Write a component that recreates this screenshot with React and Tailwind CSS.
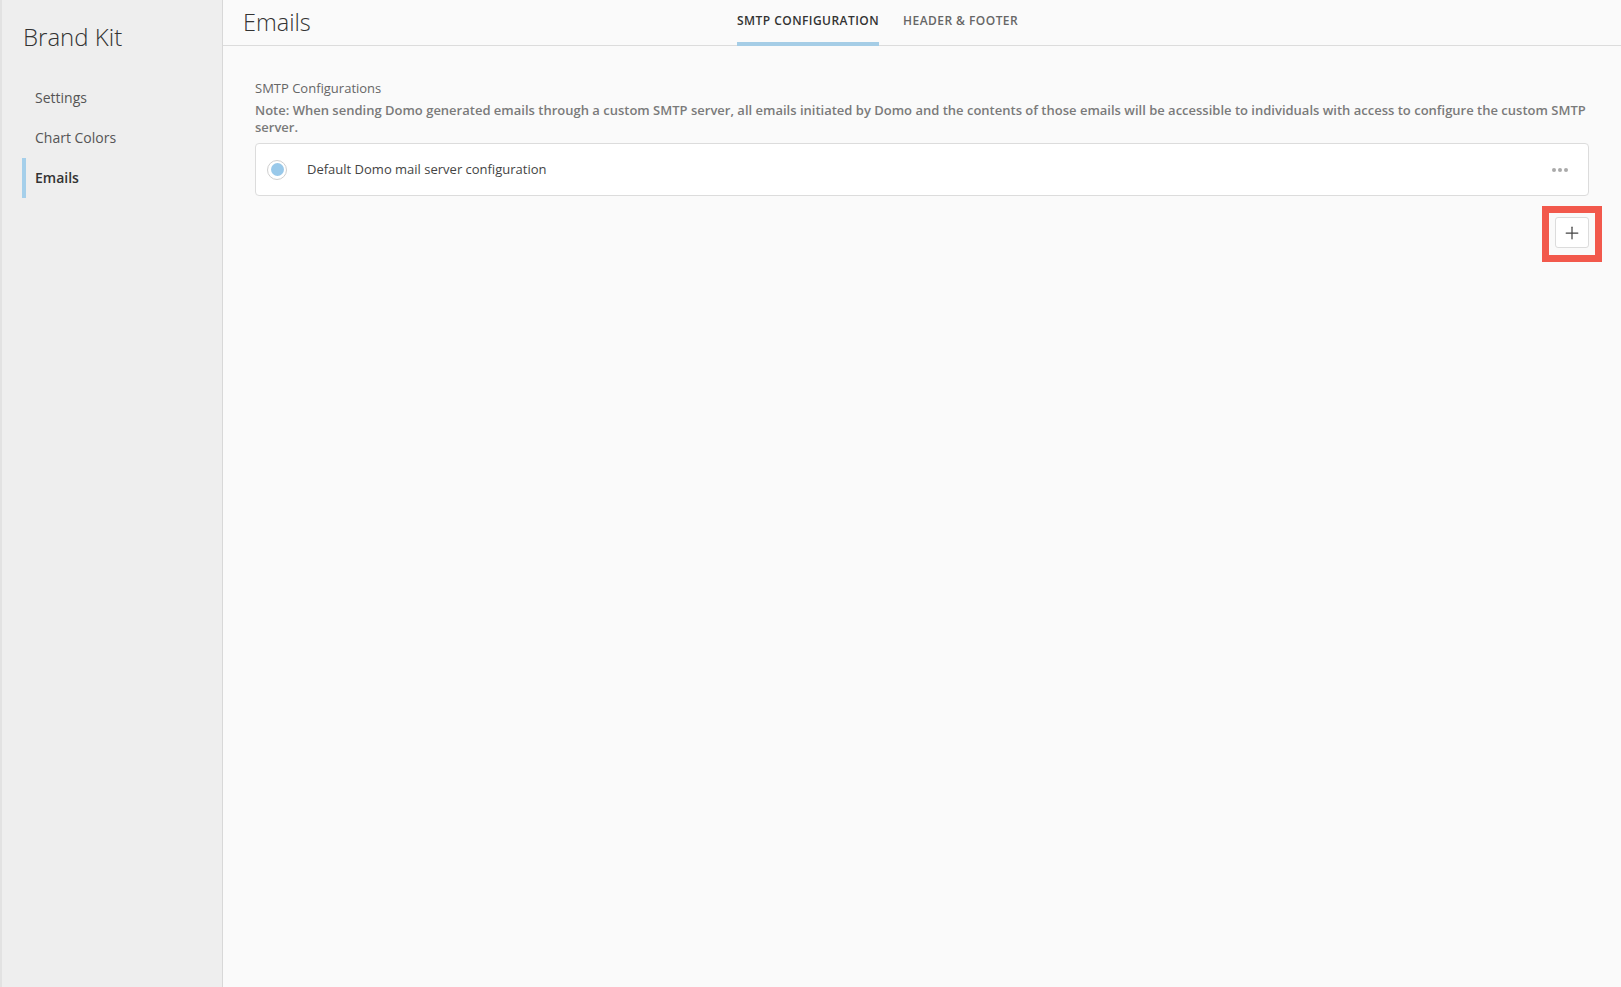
import { Plus } from "lucide-react";

const navItems = [
  { label: "Settings", active: false },
  { label: "Chart Colors", active: false },
  { label: "Emails", active: true },
];

function Sidebar() {
  return (
    <aside className="w-[223px] shrink-0 bg-[#eeeeee] border-l-2 border-l-[#e2e2e2] border-r border-r-[#d8d8d8] flex flex-col">
      {/* TITLE */}
      <h1 className="pl-[21px] pt-[19px] text-[24px] font-light text-[#333] leading-[36px]">
        Brand Kit
      </h1>

      {/* NAV */}
      <nav className="mt-[22px] flex flex-col">
        {navItems.map((item) => (
          <div
            key={item.label}
            className="relative h-[40px] flex items-center pl-[33px] text-[14px]"
          >
            {item.active && (
              <span className="absolute left-[20px] top-[1px] bottom-[-1px] w-[4px] bg-[#a5cfea]" />
            )}
            <span
              className={
                item.active
                  ? "font-semibold text-[#333]"
                  : "text-[#555]"
              }
            >
              {item.label}
            </span>
          </div>
        ))}
      </nav>
    </aside>
  );
}

function Header() {
  return (
    <header className="h-[46px] border-b border-[#dcdcdc] flex items-stretch pl-[20px]">
      <div className="w-[494px] shrink-0 pt-[6px]">
        <h2 className="text-[23.5px] font-light text-[#333] leading-[32px]">
          Emails
        </h2>
      </div>
      <div className="flex gap-[24px] text-[12px] font-semibold tracking-[0.45px]">
        <div className="relative flex items-start pt-[12px] text-[#333]">
          SMTP CONFIGURATION
          <span className="absolute left-0 right-0 bottom-[-1px] h-[4px] bg-[#a5cde6]" />
        </div>
        <div className="flex items-start pt-[12px] text-[#666]">
          HEADER &amp; FOOTER
        </div>
      </div>
    </header>
  );
}

function ConfigCard() {
  return (
    <div className="h-[53px] bg-white border border-[#dcdcdc] rounded-[4px] flex items-center pl-[11px] pr-[20px]">
      <div className="w-[20px] h-[20px] rounded-full border border-[#cfcfcf] bg-white flex items-center justify-center">
        <div className="w-[13px] h-[13px] rounded-full bg-[#99c9ea]" />
      </div>
      <span className="ml-[20px] text-[13px] text-[#444]">
        Default Domo mail server configuration
      </span>
      <div className="ml-auto flex gap-[2px]">
        <span className="w-[4px] h-[4px] rounded-full bg-[#aaa]" />
        <span className="w-[4px] h-[4px] rounded-full bg-[#aaa]" />
        <span className="w-[4px] h-[4px] rounded-full bg-[#aaa]" />
      </div>
    </div>
  );
}

export default function App() {
  return (
    <div
      className="h-screen w-full flex bg-[#fafafa] overflow-hidden"
      style={{ fontFamily: '"Open Sans", "Noto Sans", sans-serif' }}
    >
      <Sidebar />

      <main className="flex-1 flex flex-col">
        <Header />

        <section className="px-[32px] pt-[33px]">
          <div className="text-[13px] text-[#666] leading-[18px]">
            SMTP Configurations
          </div>
          <p className="mt-[5px] text-[13px] font-semibold text-[#7a7a7a] leading-[17px]">
            Note: When sending Domo generated emails through a custom SMTP
            server, all emails initiated by Domo and the contents of those
            emails will be accessible to individuals with access to configure
            the custom SMTP server.
          </p>

          <div className="mt-[7px]">
            <ConfigCard />
          </div>

          {/* ADD BUTTON */}
          <div className="mt-[21px] flex justify-end">
            <div className="relative">
              <button className="w-[34px] h-[31px] bg-white border border-[#dcdcdc] rounded-[3px] flex items-center justify-center text-[#444]">
                <Plus className="w-[20px] h-[20px]" strokeWidth={1.5} />
              </button>
              <span className="absolute left-[-13px] top-[-11px] w-[60px] h-[56px] border-[7px] border-[#f2594c] pointer-events-none" />
            </div>
          </div>
        </section>
      </main>
    </div>
  );
}
